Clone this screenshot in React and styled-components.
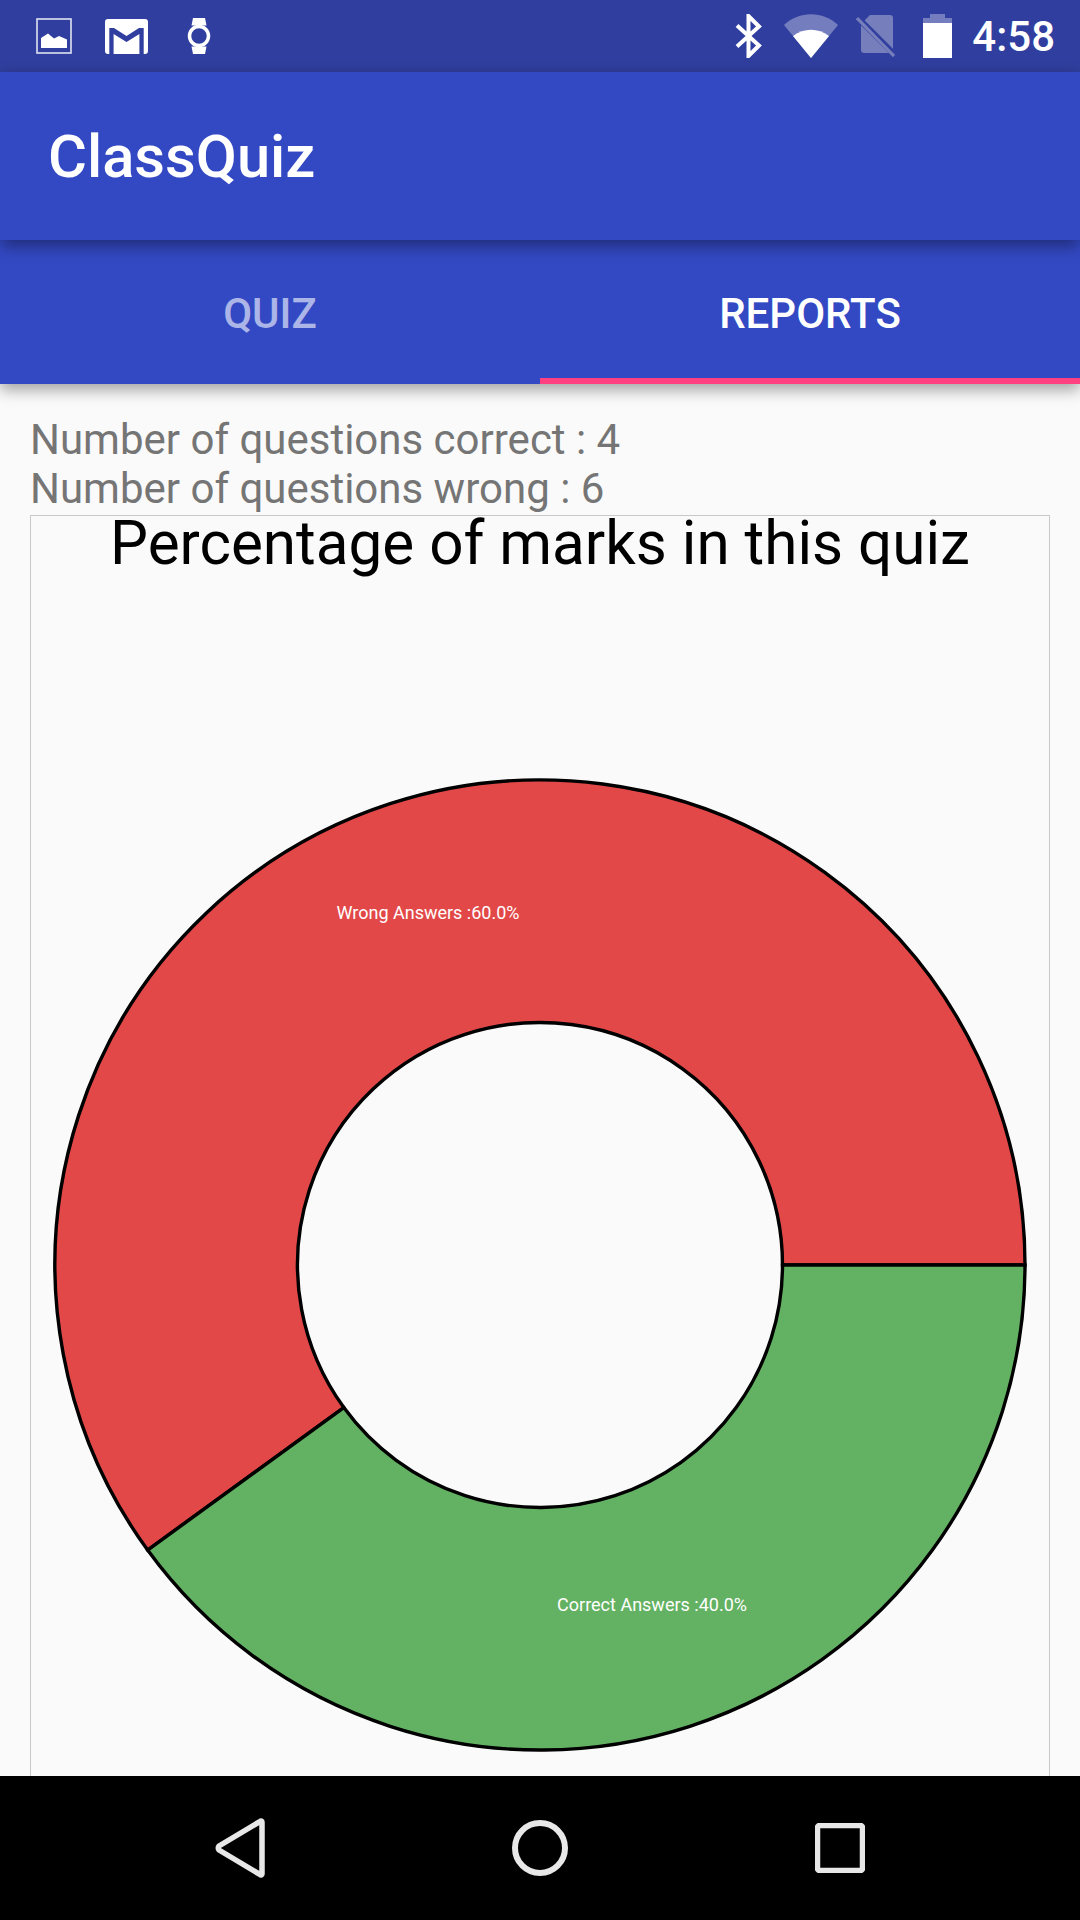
import React from "react";
import styled, { createGlobalStyle } from "styled-components";

const CX = 540;
const CY = 749;
const OUTER = 485;
const INNER = 242.5;

const point = (r, deg) => {
  const a = (deg * Math.PI) / 180;
  return `${(CX + r * Math.cos(a)).toFixed(2)} ${(CY + r * Math.sin(a)).toFixed(2)}`;
};

const slice = (from, to) => {
  const large = to - from > 180 ? 1 : 0;
  return [
    `M${point(OUTER, from)}`,
    `A${OUTER} ${OUTER} 0 ${large} 1 ${point(OUTER, to)}`,
    `L${point(INNER, to)}`,
    `A${INNER} ${INNER} 0 ${large} 0 ${point(INNER, from)}`,
    "Z",
  ].join(" ");
};

const App = () => (
  <>
    <GlobalStyle />
    <Screen>
      <StatusBar>
        <StatusIcons>
          <svg width="36" height="36" viewBox="0 0 36 36">
            <rect x="1" y="1" width="34" height="34" fill="none" stroke="#fff" strokeOpacity="0.85" strokeWidth="1.6" />
            <path d="M5 30V20l7-4.500 6 5 5-2.500 8 3.500V30z" fill="#fff" />
          </svg>
          <svg width="43" height="35" viewBox="0 0 43 35" style={{ marginLeft: 33 }}>
            <path
              d="M3 0h37a3 3 0 0 1 3 3v29a3 3 0 0 1-3 3H3a3 3 0 0 1-3-3V3a3 3 0 0 1 3-3zM4.300 9v26h4.300V15l12.900 8 12.900-8v20h4.300V9H34l-12.500 8L9 9z"
              fill="#fff"
              fillRule="evenodd"
            />
          </svg>
          <svg width="24" height="36" viewBox="0 0 24 36" style={{ marginLeft: 39 }}>
            <path d="M6 0h12l1.500 7.500h-15zM6 36h12l1.500-7.500h-15z" fill="#fff" />
            <circle cx="12" cy="18" r="9.500" fill="none" stroke="#fff" strokeWidth="3.500" />
          </svg>
        </StatusIcons>
        <StatusIcons>
          <svg width="28" height="44" viewBox="0 0 28 44">
            <path
              d="M2 11.500l22 20L13.500 42V2L24 12.500 2 32.500"
              fill="none"
              stroke="#fff"
              strokeWidth="4"
            />
          </svg>
          <svg width="54" height="44" viewBox="0 0 54 44" style={{ marginLeft: 21 }}>
            <path d="M0 11C15-3.500 39-3.500 54 11L27 44z" fill="#fff" fillOpacity="0.33" />
            <path d="M9 22c11-8.500 25-8.500 36 0L27 44z" fill="#fff" />
          </svg>
          <svg width="40" height="42" viewBox="0 0 40 42" style={{ marginLeft: 18 }}>
            <path
              d="M14 0h20a3 3 0 0 1 3 3v32a3 3 0 0 1-3 3H8a3 3 0 0 1-3-3V9z"
              fill="#767fbc"
            />
            <path d="M0 1l38 38" stroke="#303f9f" strokeWidth="6" />
            <path d="M1 3l37 38" stroke="#767fbc" strokeWidth="3.200" />
          </svg>
          <svg width="29" height="44" viewBox="0 0 29 44" style={{ marginLeft: 27 }}>
            <path d="M7 0h15v4h7v5H0V4h7z" fill="#fff" fillOpacity="0.33" />
            <path d="M0 9h29v35H0z" fill="#fff" />
          </svg>
          <Clock>4:58</Clock>
        </StatusIcons>
      </StatusBar>

      <AppBar>
        <AppTitle>ClassQuiz</AppTitle>
      </AppBar>

      <Tabs>
        <Tab>QUIZ</Tab>
        <Tab active>REPORTS</Tab>
      </Tabs>

      <Content>
        <Stat>Number of questions correct : 4</Stat>
        <Stat>Number of questions wrong : 6</Stat>
        <ChartBox>
          <ChartTitle>Percentage of marks in this quiz</ChartTitle>
          <ChartCanvas width="1080" height="1261" viewBox="0 0 1080 1261">
            <path d={slice(144, 360)} fill="#E24848" stroke="#000" strokeWidth="3.4" />
            <path d={slice(0, 144)} fill="#63B162" stroke="#000" strokeWidth="3.4" />
            <SliceLabel x="428" y="403">Wrong Answers :60.0%</SliceLabel>
            <SliceLabel x="652" y="1095">Correct Answers :40.0%</SliceLabel>
          </ChartCanvas>
        </ChartBox>
      </Content>

      <NavBar>
        <NavSlot>
          <svg width="56" height="60" viewBox="0 0 56 60">
            <path
              d="M50 4v52a1 1 0 0 1-1.700.700L7 32a3 3 0 0 1 0-4L48.300 3.300A1 1 0 0 1 50 4z"
              fill="none"
              stroke="#e8e8e8"
              strokeWidth="5.500"
              strokeLinejoin="round"
            />
          </svg>
        </NavSlot>
        <NavSlot>
          <svg width="60" height="60" viewBox="0 0 60 60">
            <circle cx="30" cy="30" r="25" fill="none" stroke="#e8e8e8" strokeWidth="6" />
          </svg>
        </NavSlot>
        <NavSlot>
          <svg width="50" height="50" viewBox="0 0 50 50">
            <rect x="2.500" y="2.500" width="45" height="45" rx="2" fill="none" stroke="#e8e8e8" strokeWidth="5.500" />
          </svg>
        </NavSlot>
      </NavBar>
    </Screen>
  </>
);

export default App;

const GlobalStyle = createGlobalStyle`
  html, body {
    margin: 0;
    padding: 0;
    background: #fafafa;
  }

  * {
    box-sizing: border-box;
  }
`;

const Screen = styled.div`
  width: 1080px;
  height: 1920px;
  display: flex;
  flex-direction: column;
  overflow: hidden;
  font-family: Roboto, "Liberation Sans", sans-serif;
  background: #fafafa;
`;

const StatusBar = styled.div`
  height: 72px;
  flex: none;
  display: flex;
  align-items: center;
  justify-content: space-between;
  padding: 0 25px 0 36px;
  background: #303f9f;
`;

const StatusIcons = styled.div`
  display: flex;
  align-items: center;
`;

const Clock = styled.span`
  margin-left: 20px;
  font-size: 42px;
  font-weight: 500;
  color: #fff;
`;

const AppBar = styled.div`
  height: 168px;
  flex: none;
  display: flex;
  align-items: center;
  padding-left: 48px;
  background: #3349c4;
  position: relative;
  z-index: 2;
  box-shadow: 0 6px 16px rgba(0, 0, 0, 0.4);
`;

const AppTitle = styled.h1`
  margin: 0;
  padding-top: 2px;
  font-size: 59.7px;
  font-weight: 500;
  color: #fff;
`;

const Tabs = styled.div`
  height: 144px;
  flex: none;
  display: grid;
  grid-template-columns: 1fr 1fr;
  background: #3349c4;
  position: relative;
  z-index: 1;
  box-shadow: 0 6px 14px rgba(0, 0, 0, 0.35);
`;

const Tab = styled.div`
  display: flex;
  align-items: center;
  justify-content: center;
  padding-top: 9px;
  font-size: 42px;
  font-weight: 500;
  color: ${(props) => (props.active ? "#fff" : "rgba(255, 255, 255, 0.6)")};
  border-bottom: 6px solid ${(props) => (props.active ? "#ff4081" : "transparent")};
`;

const Content = styled.div`
  flex: 1;
  min-height: 0;
  overflow: hidden;
  padding: 31px 30px 0 30px;
`;

const Stat = styled.div`
  font-size: 42px;
  line-height: 49px;
  color: #757575;
`;

const ChartBox = styled.div`
  position: relative;
  height: 1300px;
  margin-top: 2px;
  border: 1.5px solid #c8c8c8;
`;

const ChartTitle = styled.div`
  position: relative;
  z-index: 1;
  text-align: center;
  font-size: 60.2px;
  line-height: 56px;
  color: #000;
`;

const ChartCanvas = styled.svg`
  position: absolute;
  left: -31px;
  top: 0;
`;

const SliceLabel = styled.text`
  font-family: Roboto, "Liberation Sans", sans-serif;
  font-size: 18px;
  fill: #fff;
  text-anchor: middle;
`;

const NavBar = styled.div`
  height: 144px;
  flex: none;
  display: grid;
  grid-template-columns: repeat(3, 300px);
  justify-content: center;
  background: #000;
`;

const NavSlot = styled.div`
  display: flex;
  align-items: center;
  justify-content: center;
`;
